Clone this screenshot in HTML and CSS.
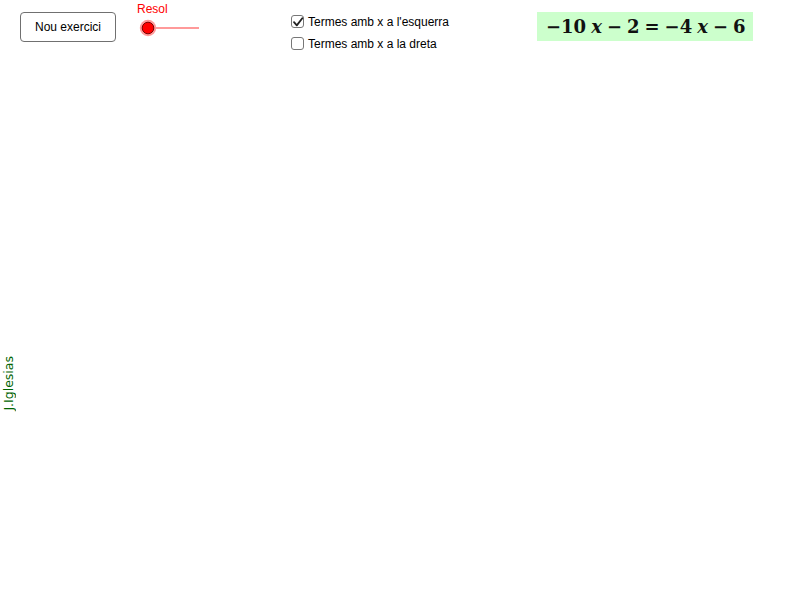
FILE: index.html
```html
<!DOCTYPE html>
<html>
<head>
<meta charset="utf-8">
<link rel="stylesheet" href="styles.css">
</head>
<body>
<div class="applet">
  <div class="toolbar">
    <button class="btn">Nou exercici</button>
    <div class="slider">
      <div class="slider-label">Resol</div>
      <svg class="slider-svg" width="66" height="20" viewBox="0 0 66 20">
        <line x1="11" y1="10" x2="62" y2="10" stroke="#ff9a9a" stroke-width="2.2"/>
        <circle cx="11" cy="10" r="8.2" fill="#ff9999"/>
        <circle cx="11" cy="10" r="5.8" fill="#ff0000" stroke="#7a0000" stroke-width="1"/>
      </svg>
    </div>
    <div class="checks">
      <label class="check">
        <span class="box">
          <svg width="14" height="14" viewBox="0 0 14 14"><path d="M3 7.2 L5.8 10.4 L11.3 3.2" fill="none" stroke="#222" stroke-width="1.8" stroke-linecap="round" stroke-linejoin="round"/></svg>
        </span>
        <span class="check-text">Termes amb x a l'esquerra</span>
      </label>
      <label class="check">
        <span class="box"></span>
        <span class="check-text">Termes amb x a la dreta</span>
      </label>
    </div>
    <div class="equation"><span class="op">−</span>10<i class="v">x</i><span class="bin">−</span>2<span class="rel">=</span><span class="op">−</span>4<i class="v">x</i><span class="bin">−</span>6</div>
  </div>
  <div class="signature">J.Iglesias</div>
</div>
</body>
</html>
```
FILE: styles.css
```css
html, body {
  margin: 0;
  padding: 0;
  background: #fff;
}
.applet {
  position: relative;
  width: 800px;
  height: 600px;
  font-family: "Liberation Sans", Arial, sans-serif;
}
.toolbar {
  display: flex;
  align-items: flex-start;
}
.btn {
  margin: 12px 0 0 20px;
  width: 96px;
  height: 30px;
  box-sizing: border-box;
  border: 1.5px solid #707070;
  border-radius: 4px;
  background: #fff;
  font-family: "Liberation Sans", Arial, sans-serif;
  font-size: 12px;
  color: #000;
  padding: 0;
}
.slider {
  margin-left: 21px;
  width: 66px;
}
.slider-label {
  margin-top: 2px;
  color: #ff0000;
  font-size: 12px;
  line-height: 14px;
}
.slider-svg {
  display: block;
  margin-top: 2px;
}
.checks {
  margin-left: 88px;
  margin-top: 14px;
  display: flex;
  flex-direction: column;
  gap: 7px;
}
.check {
  display: flex;
  align-items: center;
  height: 15px;
}
.box {
  width: 11px;
  height: 11px;
  border: 1.3px solid #777;
  border-radius: 3px;
  display: flex;
  align-items: center;
  justify-content: center;
  background: #fff;
}
.box svg {
  display: block;
  flex: none;
}
.check-text {
  margin-left: 4px;
  font-size: 12px;
  color: #000;
}
.equation {
  margin-left: auto;
  margin-right: 47px;
  margin-top: 12px;
  width: 216px;
  height: 29px;
  box-sizing: border-box;
  background: #ccffcc;
  padding-left: 9px;
  font-family: "DejaVu Serif", "Liberation Serif", serif;
  font-weight: bold;
  font-size: 18px;
  line-height: 29px;
  color: #111;
  white-space: nowrap;
}
.equation .v {
  font-style: italic;
  margin-left: 5px;
}
.equation .bin {
  margin: 0 5px;
}
.equation .rel {
  margin: 0 5px;
}
.signature {
  position: absolute;
  left: 1px;
  top: 356px;
  writing-mode: vertical-rl;
  transform: rotate(180deg);
  color: #006400;
  font-family: "DejaVu Sans", sans-serif;
  font-size: 12.5px;
  line-height: 15px;
}
```
